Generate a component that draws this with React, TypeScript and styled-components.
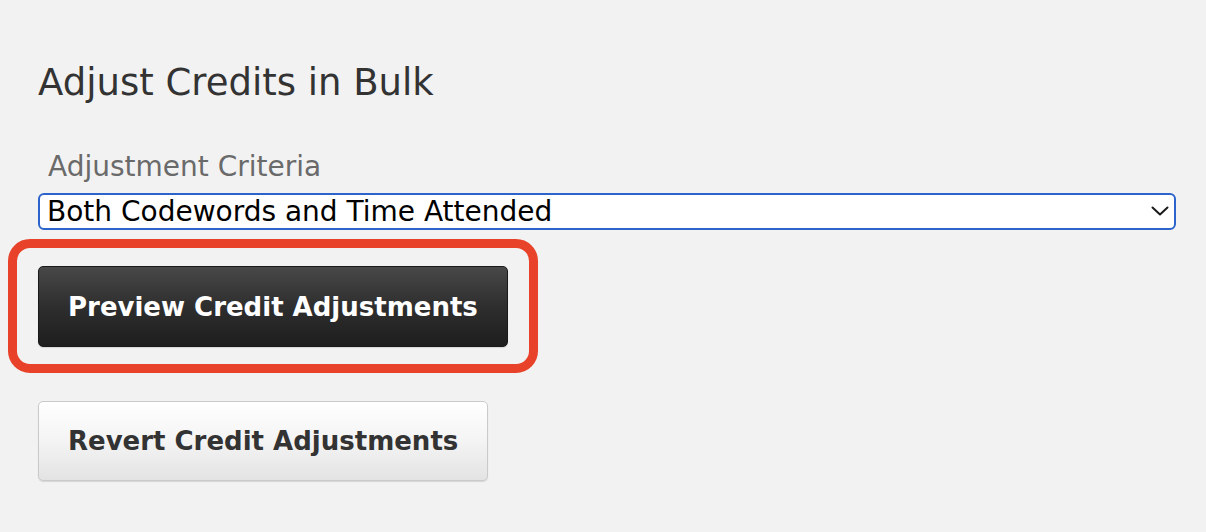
import React from 'react'
import styled, { createGlobalStyle } from 'styled-components'

const GlobalStyle = createGlobalStyle`
  html, body {
    margin: 0;
    padding: 0;
    background: #f2f2f2;
  }
  body {
    font-family: "DejaVu Sans", "Liberation Sans", sans-serif;
  }
`

const Page = styled.div`
  width: 1206px;
  height: 532px;
  box-sizing: border-box;
  padding: 59px 30px 0 38px;
  display: flex;
  flex-direction: column;
  align-items: flex-start;
`

const Title = styled.h2`
  margin: 0;
  font-size: 37px;
  line-height: 48px;
  font-weight: normal;
  color: #333333;
`

const FieldLabel = styled.label`
  margin-top: 43px;
  padding-left: 10px;
  font-size: 28px;
  line-height: 34px;
  color: #6a6a6a;
`

const SelectWrap = styled.div`
  position: relative;
  width: 1138px;
  margin-top: 9px;
`

const Select = styled.select`
  display: block;
  appearance: none;
  width: 100%;
  height: 37px;
  box-sizing: border-box;
  border: 2px solid #2d64cb;
  border-radius: 6px;
  background: #ffffff;
  padding: 0 40px 0 7px;
  font-family: "DejaVu Sans", sans-serif;
  font-size: 28px;
  color: #000000;
  outline: none;
`

const Chevron = styled.svg`
  position: absolute;
  right: 7px;
  top: 10px;
  pointer-events: none;
`

const Highlight = styled.div`
  margin-top: 9px;
  margin-left: -30px;
  border: 9px solid #e8432a;
  border-radius: 22px;
  padding: 18px 21px 17px 21px;
`

const Button = styled.button<{ $dark?: boolean }>`
  display: inline-flex;
  align-items: center;
  justify-content: center;
  height: 81px;
  box-sizing: border-box;
  padding: 0 29px;
  border-radius: 5px;
  font-family: "DejaVu Sans", sans-serif;
  font-weight: bold;
  font-size: 26px;
  cursor: pointer;
  border: 1px solid ${p => (p.$dark ? '#1a1a1a' : '#cacaca')};
  color: ${p => (p.$dark ? '#ffffff' : '#333333')};
  background: ${p =>
    p.$dark
      ? 'linear-gradient(to bottom, #484848 0%, #2e2e2e 50%, #1e1e1e 100%)'
      : 'linear-gradient(to bottom, #ffffff 0%, #f4f4f4 50%, #e3e3e3 100%)'};
  box-shadow: 0 1px 1px rgba(0, 0, 0, 0.12);
`

const RevertButton = styled(Button)`
  margin-top: 28px;
  height: 80px;
`

export default function App() {
  return (
    <>
      <GlobalStyle />
      <Page>
        <Title>Adjust Credits in Bulk</Title>
        <FieldLabel htmlFor="criteria">Adjustment Criteria</FieldLabel>
        <SelectWrap>
          <Select id="criteria" defaultValue="both">
            <option value="both">Both Codewords and Time Attended</option>
            <option value="codewords">Codewords Only</option>
            <option value="time">Time Attended Only</option>
          </Select>
          <Chevron width="18" height="16" viewBox="0 0 18 16" fill="none">
            <path d="M1.5 4.5 L9 11.5 L16.5 4.5" stroke="#1a1a1a" strokeWidth="2" strokeLinecap="round" strokeLinejoin="round" />
          </Chevron>
        </SelectWrap>
        <Highlight>
          <Button $dark>Preview Credit Adjustments</Button>
        </Highlight>
        <RevertButton>Revert Credit Adjustments</RevertButton>
      </Page>
    </>
  )
}
